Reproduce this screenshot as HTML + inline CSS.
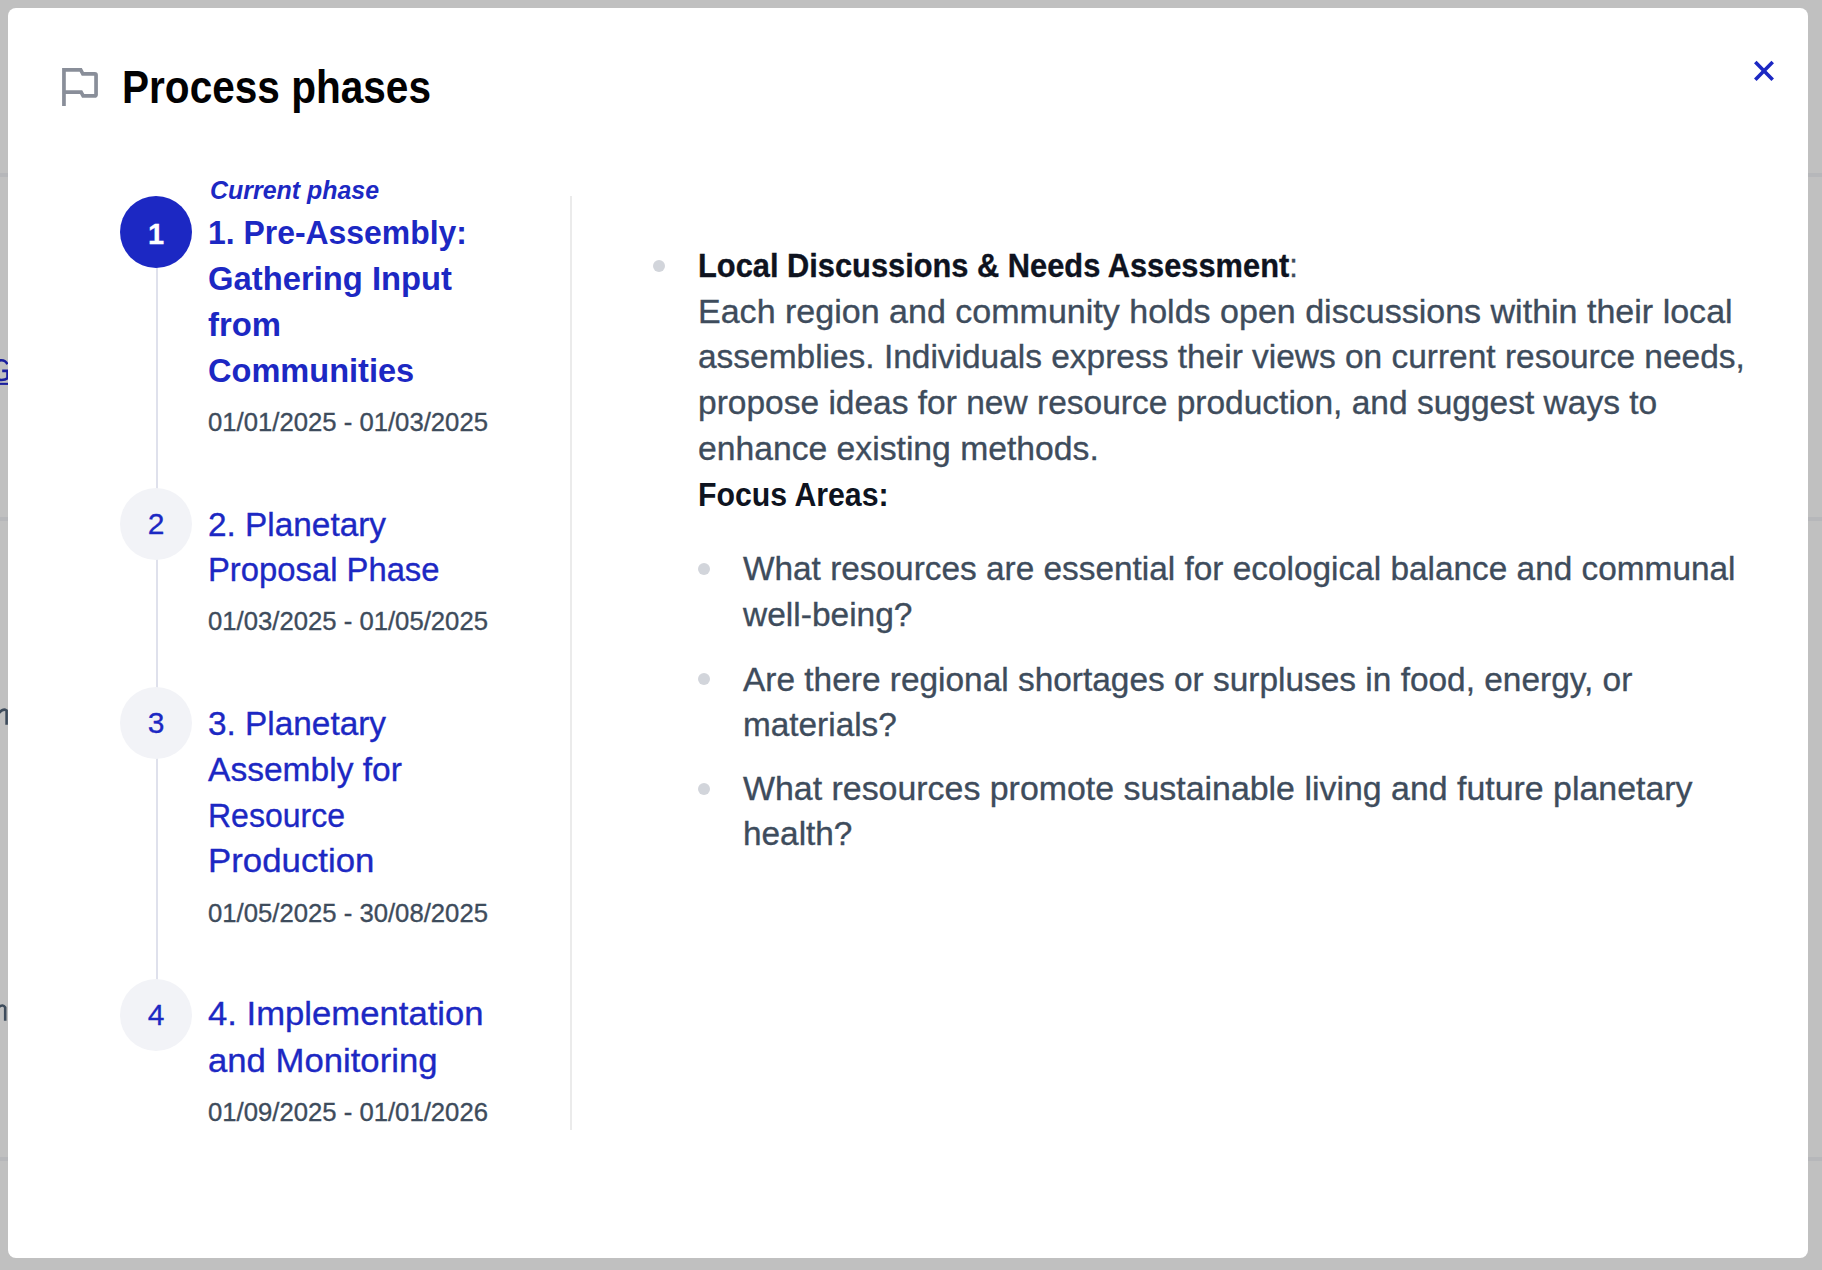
<!DOCTYPE html>
<html><head><meta charset="utf-8"><title>Process phases</title>
<style>
html,body{margin:0;padding:0;width:1822px;height:1270px;overflow:hidden;background:#c0c0c0;font-family:"Liberation Sans",sans-serif;}
.bgline{position:absolute;left:0;width:1822px;height:4px;background:#b6b7ba;}
.modal{position:absolute;left:8px;top:8px;width:1800px;height:1250px;background:#fff;border-radius:8px;}
.ln{position:absolute;white-space:nowrap;transform-origin:0 0;}
.rg{-webkit-text-stroke:0.35px currentColor;}
.circ{position:absolute;left:120px;width:72px;height:72px;border-radius:50%;background:#f2f3f7;}
.num{position:absolute;left:120px;width:72px;text-align:center;font-size:30px;line-height:72px;color:#1c28c3;-webkit-text-stroke:0.3px currentColor;}
.dot{position:absolute;width:12px;height:12px;border-radius:50%;background:#d2d5db;}
</style></head><body>
<div class="bgline" style="top:173px"></div>
<div class="bgline" style="top:517px"></div>
<div class="bgline" style="top:1157px"></div>
<!-- fragments of the page behind the modal -->
<svg style="position:absolute;left:0;top:0" width="10" height="1270" viewBox="0 0 10 1270">
<g fill="none" stroke="#1a1f9e" stroke-width="2.6">
<path d="M7.4 364.2 Q5.5 360.2 1.5 360.2 Q-0.5 360.2 -1 361"/>
<path d="M2.2 370.9 H7.5 V378.3 Q5.5 380 1.5 380 Q-0.5 380 -1 379.5"/>
</g>
<rect x="0" y="382.8" width="8" height="2.1" fill="#1a1f9e"/>
<g fill="none" stroke="#3e4c5c" stroke-width="2.6">
<path d="M-1 713 Q3 708 6.6 710.5 V724.8"/>
<path d="M-1 1007 Q3 1003.8 5.2 1007.5 V1020.8"/>
</g>
</svg>
<div class="modal"></div>
<!-- header icon -->
<svg style="position:absolute;left:0;top:0" width="120" height="120" viewBox="0 0 120 120"><path fill="none" stroke="#898e99" stroke-width="3.7" stroke-linejoin="miter" d="M63.95 105.9V69.95H80.7L82.85 73.85H94.8A1.25 1.25 0 0 1 96.05 75.1V94.7A1.25 1.25 0 0 1 94.8 95.95H83.15L81.1 92.1H63.95"/></svg>
<!-- close -->
<svg style="position:absolute;left:1740px;top:50px" width="50" height="45" viewBox="1740 50 50 45"><path fill="none" stroke="#1c28c3" stroke-width="3.6" d="M1755.3 62L1772.7 79.7M1772.7 62L1755.3 79.7"/></svg>
<!-- timeline vertical line -->
<div style="position:absolute;left:156px;top:260px;width:2px;height:725px;background:#dfe1ec"></div>
<!-- divider -->
<div style="position:absolute;left:570px;top:196px;width:2px;height:934px;background:#ebebeb"></div>
<div class="circ" style="top:196px;background:#1c28c3"></div>
<div class="num" style="top:197.5px;color:#fff;font-weight:700;font-size:29px">1</div>
<div class="circ" style="top:488px"></div>
<div class="num" style="top:488px">2</div>
<div class="circ" style="top:687px"></div>
<div class="num" style="top:687px">3</div>
<div class="circ" style="top:979px"></div>
<div class="num" style="top:979px">4</div>
<!-- bullets -->
<div class="dot" style="left:653px;top:260px"></div>
<div class="dot" style="left:698px;top:563px"></div>
<div class="dot" style="left:698px;top:673px"></div>
<div class="dot" style="left:698px;top:783px"></div>
<div class="ln" style="left:122px;top:59.76px;font-size:46px;line-height:55.2px;font-weight:700;font-style:normal;color:#020203;transform:scaleX(0.8820);">Process phases</div>
<div class="ln" style="left:210px;top:174.91px;font-size:26.3px;line-height:31.56px;font-weight:700;font-style:italic;color:#1c28c3;transform:scaleX(0.9485);">Current phase</div>
<div class="ln" style="left:208px;top:211.82px;font-size:34px;line-height:40.8px;font-weight:700;font-style:normal;color:#1c28c3;transform:scaleX(0.9387);">1. Pre-Assembly:</div>
<div class="ln" style="left:208px;top:257.82px;font-size:34px;line-height:40.8px;font-weight:700;font-style:normal;color:#1c28c3;transform:scaleX(0.9641);">Gathering Input</div>
<div class="ln" style="left:208px;top:303.62px;font-size:34px;line-height:40.8px;font-weight:700;font-style:normal;color:#1c28c3;transform:scaleX(0.9661);">from</div>
<div class="ln" style="left:208px;top:349.62px;font-size:34px;line-height:40.8px;font-weight:700;font-style:normal;color:#1c28c3;transform:scaleX(0.9575);">Communities</div>
<div class="ln rg" style="left:208px;top:406.87px;font-size:25.7px;line-height:30.84px;font-weight:400;font-style:normal;color:#3e4c5c;">01/01/2025 - 01/03/2025</div>
<div class="ln rg" style="left:208px;top:503.72px;font-size:34px;line-height:40.8px;font-weight:400;font-style:normal;color:#1c28c3;transform:scaleX(0.9810);">2. Planetary</div>
<div class="ln rg" style="left:208px;top:548.82px;font-size:34px;line-height:40.8px;font-weight:400;font-style:normal;color:#1c28c3;transform:scaleX(0.9644);">Proposal Phase</div>
<div class="ln rg" style="left:208px;top:606.17px;font-size:25.7px;line-height:30.84px;font-weight:400;font-style:normal;color:#3e4c5c;">01/03/2025 - 01/05/2025</div>
<div class="ln rg" style="left:208px;top:702.72px;font-size:34px;line-height:40.8px;font-weight:400;font-style:normal;color:#1c28c3;transform:scaleX(0.9810);">3. Planetary</div>
<div class="ln rg" style="left:208px;top:748.82px;font-size:34px;line-height:40.8px;font-weight:400;font-style:normal;color:#1c28c3;transform:scaleX(0.9868);">Assembly for</div>
<div class="ln rg" style="left:208px;top:794.62px;font-size:34px;line-height:40.8px;font-weight:400;font-style:normal;color:#1c28c3;transform:scaleX(0.9415);">Resource</div>
<div class="ln rg" style="left:208px;top:840.42px;font-size:34px;line-height:40.8px;font-weight:400;font-style:normal;color:#1c28c3;transform:scaleX(1.0237);">Production</div>
<div class="ln rg" style="left:208px;top:897.67px;font-size:25.7px;line-height:30.84px;font-weight:400;font-style:normal;color:#3e4c5c;">01/05/2025 - 30/08/2025</div>
<div class="ln rg" style="left:208px;top:993.42px;font-size:34px;line-height:40.8px;font-weight:400;font-style:normal;color:#1c28c3;transform:scaleX(1.0197);">4. Implementation</div>
<div class="ln rg" style="left:208px;top:1039.52px;font-size:34px;line-height:40.8px;font-weight:400;font-style:normal;color:#1c28c3;transform:scaleX(1.0204);">and Monitoring</div>
<div class="ln rg" style="left:208px;top:1096.67px;font-size:25.7px;line-height:30.84px;font-weight:400;font-style:normal;color:#3e4c5c;">01/09/2025 - 01/01/2026</div>
<div class="ln rg" style="left:698px;top:244.90px;font-size:33.7px;line-height:40.44px;font-weight:400;font-style:normal;color:#3e4c5c;transform:scaleX(0.9144);"><b style="color:#0e1320">Local Discussions &amp; Needs Assessment</b>:</div>
<div class="ln rg" style="left:698px;top:291.00px;font-size:33.7px;line-height:40.44px;font-weight:400;font-style:normal;color:#3e4c5c;transform:scaleX(1.0101);">Each region and community holds open discussions within their local</div>
<div class="ln rg" style="left:698px;top:336.40px;font-size:33.7px;line-height:40.44px;font-weight:400;font-style:normal;color:#3e4c5c;transform:scaleX(0.9930);">assemblies. Individuals express their views on current resource needs,</div>
<div class="ln rg" style="left:698px;top:381.50px;font-size:33.7px;line-height:40.44px;font-weight:400;font-style:normal;color:#3e4c5c;transform:scaleX(0.9946);">propose ideas for new resource production, and suggest ways to</div>
<div class="ln rg" style="left:698px;top:427.60px;font-size:33.7px;line-height:40.44px;font-weight:400;font-style:normal;color:#3e4c5c;">enhance existing methods.</div>
<div class="ln" style="left:698px;top:474.00px;font-size:33.7px;line-height:40.44px;font-weight:700;font-style:normal;color:#0e1320;transform:scaleX(0.8983);">Focus Areas:</div>
<div class="ln rg" style="left:743px;top:548.10px;font-size:33.7px;line-height:40.44px;font-weight:400;font-style:normal;color:#3e4c5c;transform:scaleX(0.9907);">What resources are essential for ecological balance and communal</div>
<div class="ln rg" style="left:743px;top:593.60px;font-size:33.7px;line-height:40.44px;font-weight:400;font-style:normal;color:#3e4c5c;transform:scaleX(0.9946);">well-being?</div>
<div class="ln rg" style="left:743px;top:658.50px;font-size:33.7px;line-height:40.44px;font-weight:400;font-style:normal;color:#3e4c5c;transform:scaleX(0.9921);">Are there regional shortages or surpluses in food, energy, or</div>
<div class="ln rg" style="left:743px;top:703.90px;font-size:33.7px;line-height:40.44px;font-weight:400;font-style:normal;color:#3e4c5c;transform:scaleX(0.9897);">materials?</div>
<div class="ln rg" style="left:743px;top:768.10px;font-size:33.7px;line-height:40.44px;font-weight:400;font-style:normal;color:#3e4c5c;transform:scaleX(1.0061);">What resources promote sustainable living and future planetary</div>
<div class="ln rg" style="left:743px;top:813.10px;font-size:33.7px;line-height:40.44px;font-weight:400;font-style:normal;color:#3e4c5c;transform:scaleX(0.9898);">health?</div>
</body></html>
